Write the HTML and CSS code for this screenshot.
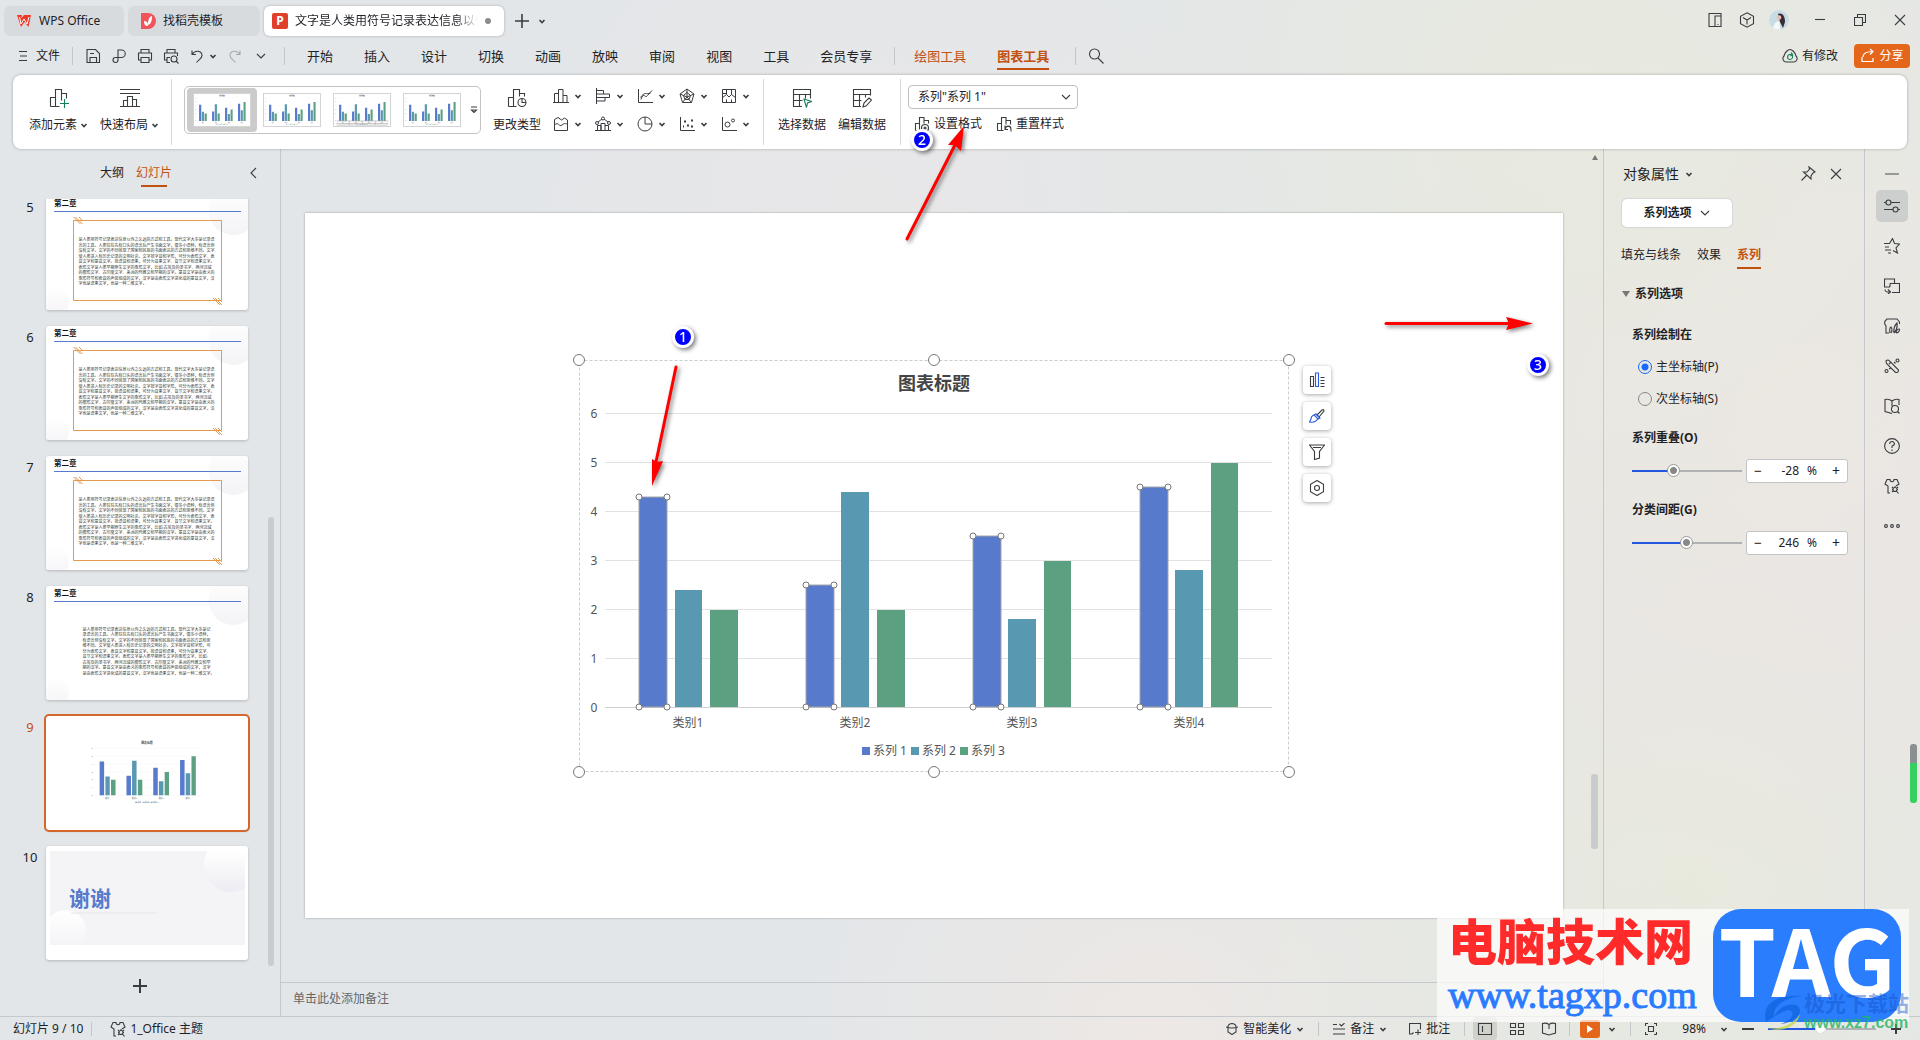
FILE: index.html
```html
<!DOCTYPE html>
<html lang="zh-CN">
<head>
<meta charset="utf-8">
<title>WPS Office</title>
<link rel="stylesheet" href="styles.css">
</head>
<body>
<svg class="defs" aria-hidden="true">
  <symbol id="chev" viewBox="0 0 8 8"><path d="M1.500 3 4 5.500 6.500 3" stroke-width="1.600"/></symbol>
  <symbol id="chev-lg" viewBox="0 0 12 12"><path d="M2 4 6 8 10 4"/></symbol>
  <symbol id="save" viewBox="0 0 16 16"><path d="M2 14.500V1.500h8.500l4 4v9zM5 14V9.500h6.500V14M5 5.500h4"/></symbol>
  <symbol id="export" viewBox="0 0 16 16"><path d="M7 9V2h3.500a3.500 3.500 0 0 1 0 7.500H4.500a2.500 2.500 0 1 0 2.500 2.500V9"/></symbol>
  <symbol id="print" viewBox="0 0 16 16"><path d="M4 5V1.500h8V5M4 12H1.500V5h13v7H12M4 9.500h8v5H4z"/></symbol>
  <symbol id="preview" viewBox="0 0 16 16"><path d="M4 5V1.500h8V5M4 12H1.500V5h13v3M7 14.500H4v-5h3"/><circle cx="11" cy="11" r="3"/><path d="m13 13 2.500 2.500"/></symbol>
  <symbol id="undo" viewBox="0 0 16 16"><path d="M3 2.500v4h4M3 6.500C6 1.500 13 2.500 13 7.500c0 3-3 4-5.500 7"/></symbol>
  <symbol id="redo" viewBox="0 0 16 16"><path d="M13 2.500v4H9M13 6.500C10 1.500 3 2.500 3 7.500c0 3 3 4 5.500 7"/></symbol>
  <symbol id="search" viewBox="0 0 16 16"><circle cx="6.500" cy="6" r="5"/><path d="m10 10 5.500 5.500"/></symbol>
  <symbol id="chart-col" viewBox="0 0 16 16"><path d="M1.500 14.500V5.500h4v9M5.500 14.500v-13h4.500v13M10 7.500h4v7M0 14.500h16"/></symbol>
  <symbol id="chart-bar" viewBox="0 0 16 16"><path d="M1.500 0v16M1.500 2.500h7v3.500M1.500 6h13v3.500h-13M1.500 9.500M10 9.500v3.500H1.500"/></symbol>
  <symbol id="chart-line" viewBox="0 0 16 16"><path d="M1.500 1v13.500H16M4 11.500c3-9 4 0 6.500-4L15 2.500M3.500 9.500C8 3 9 7 13.500 5"/></symbol>
  <symbol id="chart-radar" viewBox="0 0 16 16"><path d="M8 1 15 6 12.500 14.500h-9L1 6zM8 1v8M8 9l4.500 5.500M8 9l-4.500 5.500M1 6l7 3 7-3M8 4.500l3.500 3-1.500 4H6l-1.500-4z"/></symbol>
  <symbol id="chart-map" viewBox="0 0 16 16"><path d="M1.500 1.500h13v13h-13zM1.500 9.500l4-3 2.500 2.500 2.500-2.500 4 3M5.500 1.500v5M10.500 1.500v5M1.500 5.500h4M5.500 14.500v-3M10.500 14.500v-3"/></symbol>
  <symbol id="chart-area" viewBox="0 0 16 16"><path d="M1.500 14.500V3.500l3.500-2 3.500 2.500 3-2 3 2v10.500zM1.500 9c4-4 4.500 2.500 7.500 0s4-1 5.500-1"/></symbol>
  <symbol id="chart-combo" viewBox="0 0 16 16"><path d="M2.500 14.500V9.500h3.500v5M6 14.500v-7h4v7M10 9.500h3.500v5M0 14.500h16M3 6l4-3M9 3l4 3"/><circle cx="2" cy="7" r="1.500"/><circle cx="8" cy="2.500" r="1.500"/><circle cx="14" cy="7" r="1.500"/></symbol>
  <symbol id="chart-pie" viewBox="0 0 16 16"><circle cx="8" cy="8" r="7"/><path d="M8 1v7h7"/></symbol>
  <symbol id="chart-dots" viewBox="0 0 16 16"><path d="M1.500 1v13.500H16"/><path d="M5 5.500h2M8 9.500h2M12 4.500h2M12 10.500h2M4 10.500h1" stroke-width="2"/></symbol>
  <symbol id="chart-bubble" viewBox="0 0 16 16"><path d="M1.500 1v13.500H16"/><circle cx="6.500" cy="8.500" r="2.500"/><circle cx="12" cy="4.500" r="1.500"/></symbol>
  <symbol id="add-el" viewBox="0 0 20 20"><path d="M1.500 18.500V9.500h5M6.500 18.500v-17h6v11M12.500 5.500h5v5M1.500 18.500h9"/><path class="green" d="M11 15.500h9M15.500 11v9"/></symbol>
  <symbol id="layout" viewBox="0 0 20 20"><path d="M0 1.500h20M0 5.500h20M3.500 18.500v-6h4M7.500 18.500v-10h5v10M12.500 11.500h4v7M0 18.500h20"/></symbol>
  <symbol id="change-type" viewBox="0 0 20 20"><path d="M1.500 18.500V9.500h5M6.500 18.500v-17h6v7M12.500 5.500h5v3M1.500 18.500h8"/><circle cx="15" cy="14.500" r="4"/><path d="M15 10.500v4h4"/></symbol>
  <symbol id="table-sel" viewBox="0 0 20 20"><path d="M10 18.500H1.500v-17h17v9M1.500 6.500h17M1.500 12.500h9M7.500 6.500v12M13.500 6.500v4"/><path class="green" d="m12 11 7.500 2.500-4 1.500-1 4.500z"/></symbol>
  <symbol id="table-edit" viewBox="0 0 20 20"><path d="M9 18.500H1.500v-17h17v6M1.500 6.500h17M1.500 12.500h8M7.500 6.500v12M13.500 6.500v3M11 19l1-4 5-5 2.500 2-5.500 6z"/></symbol>
  <symbol id="fmt" viewBox="0 0 16 16"><path d="M1.500 14.500v-7h4M5.500 14.500v-13h4.500v6M10 4.500h4.500v3M1.500 14.500h5"/><circle cx="11" cy="12" r="3.500"/><circle cx="11" cy="12" r="1"/></symbol>
  <symbol id="reset" viewBox="0 0 16 16"><path d="M1.500 14.500v-7h4M5.500 14.500v-13h4.500v7M10 4.500h4.500v4M1.500 14.500h6M9 9.500v4h3M9 13.500c1-5 6-4 6 0v2"/></symbol>
  <symbol id="shirt" viewBox="0 0 16 16"><path d="M6 15H4V8L1 6l2-4.500h3c0 3 4 3 4 0h3L15 6l-3 2"/><circle cx="11" cy="11.500" r="2"/><path d="m8 9 1 1M14 9l-1 1M8 14l1-1M12.500 13l2 2.500M11 8v1M8 11.500h1M13 11.500h1"/></symbol>
</svg>

<header class="titlebar">
  <nav class="doctabs">
    <button class="doctab home"><svg class="logo" viewBox="0 0 16 14"><path d="M1 1h5l-1 3.500L8 1h7L12.500 13 8.500 8 5 13z" fill="#f03a28"/><path d="m3.500 3 1.500 7 3-5 3 5L13 3" stroke="#fff" stroke-width="1" fill="none"/></svg>WPS Office</button>
    <button class="doctab shell"><svg class="logo" viewBox="0 0 16 16"><path d="M1 0h7a8 8 0 0 1 0 16H1z" fill="#f0535a"/><path d="M4 8c4 0 4 3 4 5-3 0-4-2-4-5zM8 12c0-6 2-9 4-9 0 5-1 8-4 9z" fill="#fff"/></svg>找稻壳模板</button>
    <button class="doctab current"><span class="pbadge">P</span><span class="doctitle">文字是人类用符号记录表达信息以传</span><i class="dot"></i></button>
    <button class="plain" aria-label="新建"><svg class="ic s16" viewBox="0 0 16 16"><path d="M1 8h14M8 1v14" stroke-width="1.600"/></svg></button>
    <button class="plain more" aria-label="更多"><svg class="ic s8"><use href="#chev"/></svg></button>
  </nav>
  <div class="syscluster">
    <button class="sys" aria-label="侧栏"><svg class="ic s16" viewBox="0 0 16 16"><path d="M14 4V1.500H2v13h6M8 4h6v10.500H8zM10.500 12.500h1"/></svg></button>
    <button class="sys" aria-label="组件"><svg class="ic s16" viewBox="0 0 16 16"><path d="m8 .800 6.500 3.500v7.400L8 15.200l-6.500-3.500V4.300zM4 5.500 8 8l4-2.500M8 8v4.500"/></svg></button>
    <button class="sys avatar" aria-label="账号"><svg class="s20" viewBox="0 0 20 20"><circle cx="10" cy="10" r="10" fill="#c9dce4"/><path d="M9 4c5-2 7 3 7 8l-2 6-3-6z" fill="#3a2c36"/><circle cx="10" cy="7.500" r="2.300" fill="#e8c0b4"/><path d="M4 18q1-6 6-7l1.500 8.500Q7 20 4 18z" fill="#f4f7f9"/></svg></button>
    <button class="sys wide" aria-label="最小化"><svg class="ic s12" viewBox="0 0 12 12"><path d="M1 5.500h10"/></svg></button>
    <button class="sys wide" aria-label="还原"><svg class="ic s12" viewBox="0 0 12 12"><path d="M.500 3.500h8v8h-8zM3.500 3.500v-3h8v8h-3"/></svg></button>
    <button class="sys wide" aria-label="关闭"><svg class="ic s12" viewBox="0 0 12 12"><path d="m1 1 10 10M11 1 1 11"/></svg></button>
  </div>
</header>

<div class="menubar">
  <button class="file"><svg class="ic s12" viewBox="0 0 12 12"><path d="M1 1.500h8M2 6h7M1 10.500h8"/></svg>文件</button>
  <i class="vline"></i>
  <div class="quick">
    <button class="plain" aria-label="保存"><svg class="ic s16"><use href="#save"/></svg></button>
    <button class="plain" aria-label="输出"><svg class="ic s16"><use href="#export"/></svg></button>
    <button class="plain" aria-label="打印"><svg class="ic s16"><use href="#print"/></svg></button>
    <button class="plain" aria-label="打印预览"><svg class="ic s16"><use href="#preview"/></svg></button>
    <button class="plain split" aria-label="撤销"><svg class="ic s16"><use href="#undo"/></svg><svg class="ic s8"><use href="#chev"/></svg></button>
    <button class="plain faded" aria-label="恢复"><svg class="ic s16"><use href="#redo"/></svg></button>
    <button class="plain" aria-label="自定义"><svg class="ic s12"><use href="#chev-lg"/></svg></button>
  </div>
  <i class="vline"></i>
  <nav class="menus">
    <button>开始</button><button>插入</button><button>设计</button><button>切换</button><button>动画</button><button>放映</button><button>审阅</button><button>视图</button><button>工具</button><button>会员专享</button>
  </nav>
  <i class="vline"></i>
  <nav class="menus tools"><button>绘图工具</button><button class="on">图表工具</button></nav>
  <i class="vline"></i>
  <button class="plain find" aria-label="搜索"><svg class="ic s16"><use href="#search"/></svg></button>
  <div class="sharing">
    <button class="plain cloud"><svg class="ic s16" viewBox="0 0 16 16"><path d="M4 14a3.500 3.500 0 0 1-2-6C3 4 6 1.500 8 1.500S13 4 14 8a3.500 3.500 0 0 1-2 6z"/><path class="green" d="M10.500 7v2.500a2.500 2.500 0 1 1-2.500-3h2M9 4.500l1.500 2-2 1.500"/></svg>有修改</button>
    <button class="share"><svg class="s16" viewBox="0 0 16 16" fill="none" stroke="#fff" stroke-width="1.200"><path d="M2 9v4.500h11V10M3 9c0-4 4-5.500 10-5.500M10 1l3 2.500-3 3"/></svg>分享</button>
  </div>
</div>

<section class="ribbon">
  <button class="big"><svg class="ic s20"><use href="#add-el"/></svg><span>添加元素<svg class="ic s8"><use href="#chev"/></svg></span></button>
  <button class="big"><svg class="ic s20"><use href="#layout"/></svg><span>快速布局<svg class="ic s8"><use href="#chev"/></svg></span></button>
  <i class="sep"></i>
  <div class="gallery">
    <button class="style on" aria-label="样式 1"><svg viewBox="0 0 710 412"><use href="#plot"/></svg></button>
    <button class="style" aria-label="样式 2"><svg viewBox="0 0 710 412"><use href="#plot"/></svg></button>
    <button class="style" aria-label="样式 3"><svg viewBox="0 0 710 412"><use href="#plot"/><path d="M26 347h667M26 380h667M26 400h667M192 347v53M359 347v53M526 347v53" stroke="#aaa" stroke-width="8"/></svg></button>
    <button class="style" aria-label="样式 4"><svg viewBox="0 0 710 412"><use href="#plot"/></svg></button>
    <button class="plain" aria-label="更多样式"><svg class="ic s8" viewBox="0 0 8 8"><path d="M1 1h6M1.500 4 4 6.500 6.500 4z"/></svg></button>
  </div>
  <button class="big"><svg class="ic s20"><use href="#change-type"/></svg><span>更改类型</span></button>
  <div class="types">
    <button aria-label="柱形图"><svg class="ic s16"><use href="#chart-col"/></svg><svg class="ic s8"><use href="#chev"/></svg></button>
    <button aria-label="条形图"><svg class="ic s16"><use href="#chart-bar"/></svg><svg class="ic s8"><use href="#chev"/></svg></button>
    <button aria-label="折线图"><svg class="ic s16"><use href="#chart-line"/></svg><svg class="ic s8"><use href="#chev"/></svg></button>
    <button aria-label="雷达图"><svg class="ic s16"><use href="#chart-radar"/></svg><svg class="ic s8"><use href="#chev"/></svg></button>
    <button aria-label="地图"><svg class="ic s16"><use href="#chart-map"/></svg><svg class="ic s8"><use href="#chev"/></svg></button>
    <button aria-label="面积图"><svg class="ic s16"><use href="#chart-area"/></svg><svg class="ic s8"><use href="#chev"/></svg></button>
    <button aria-label="组合图"><svg class="ic s16"><use href="#chart-combo"/></svg><svg class="ic s8"><use href="#chev"/></svg></button>
    <button aria-label="饼图"><svg class="ic s16"><use href="#chart-pie"/></svg><svg class="ic s8"><use href="#chev"/></svg></button>
    <button aria-label="散点图"><svg class="ic s16"><use href="#chart-dots"/></svg><svg class="ic s8"><use href="#chev"/></svg></button>
    <button aria-label="气泡图"><svg class="ic s16"><use href="#chart-bubble"/></svg><svg class="ic s8"><use href="#chev"/></svg></button>
  </div>
  <i class="sep"></i>
  <div class="pair">
    <button class="big"><svg class="ic s20"><use href="#table-sel"/></svg><span>选择数据</span></button>
    <button class="big"><svg class="ic s20"><use href="#table-edit"/></svg><span>编辑数据</span></button>
  </div>
  <i class="sep"></i>
  <div class="formatting">
    <div class="selectbox">
      <select aria-label="图表元素"><option>系列"系列 1"</option></select>
      <svg class="ic s12"><use href="#chev-lg"/></svg>
    </div>
    <div class="fmtrow">
      <button><svg class="ic s16"><use href="#fmt"/></svg>设置格式</button>
      <button><svg class="ic s16"><use href="#reset"/></svg>重置样式</button>
    </div>
  </div>
</section>

<main class="main">
  <aside class="slides">
    <div class="sidetabs">
      <button>大纲</button><button class="on">幻灯片</button>
      <button class="collapse" aria-label="收起"><svg class="ic s12" viewBox="0 0 12 12"><path d="M8 1 3 6l5 5"/></svg></button>
    </div>
    <ol class="list">
      <li class="cut"><span>5</span>
        <svg class="thumb" viewBox="0 0 404 228">
          <circle cx="375" cy="28" r="50" fill="url(#orb2)"/><circle cx="16" cy="212" r="30" fill="url(#orb2)"/>
          <text x="16" y="20" class="chap">第二章</text><path d="M16 31h374" class="rule"/>
          <path d="M55 49h296v160H55zM55 42l14 14M59 42l14 14M66 42l8 8M334 204l14 14M338 204l14 14M344 204l8 8" class="frame"/>
          <text class="para"><tspan x="65" y="90">是人类用符号记录表达信息以传之久远的方式和工具。现代文字大多是记录语</tspan><tspan x="65" dy="11">言的工具。人类往往先有口头的语言后产生书面文字，很多小语种，有语言但</tspan><tspan x="65" dy="11">没有文字。文字的不同体现了国家和民族的书面表达的方式和思维不同。文字</tspan><tspan x="65" dy="11">使人类进入有历史记录的文明社会。文字按字音和字形，可分为表形文字、表</tspan><tspan x="65" dy="11">音文字和意音文字。按语音和语素，可分为音素文字、音节文字和语素文字。</tspan><tspan x="65" dy="11">表形文字是人类早期原生文字的象形文字，比如:古埃及的圣书字、两河流域</tspan><tspan x="65" dy="11">的楔形文字、古印度文字、美洲的玛雅文和早期的汉字。意音文字是由表义的</tspan><tspan x="65" dy="11">象形符号和表音的声旁组成的文字，汉字是由表形文字进化成的意音文字，汉</tspan><tspan x="65" dy="11">字也是语素文字，也是一种二维文字。</tspan></text>
        </svg></li>
      <li><span>6</span>
        <svg class="thumb" viewBox="0 0 404 228">
          <circle cx="375" cy="28" r="50" fill="url(#orb2)"/><circle cx="16" cy="212" r="30" fill="url(#orb2)"/>
          <text x="16" y="20" class="chap">第二章</text><path d="M16 31h374" class="rule"/>
          <path d="M55 49h296v160H55zM55 42l14 14M59 42l14 14M66 42l8 8M334 204l14 14M338 204l14 14M344 204l8 8" class="frame"/>
          <text class="para"><tspan x="65" y="90">是人类用符号记录表达信息以传之久远的方式和工具。现代文字大多是记录语</tspan><tspan x="65" dy="11">言的工具。人类往往先有口头的语言后产生书面文字，很多小语种，有语言但</tspan><tspan x="65" dy="11">没有文字。文字的不同体现了国家和民族的书面表达的方式和思维不同。文字</tspan><tspan x="65" dy="11">使人类进入有历史记录的文明社会。文字按字音和字形，可分为表形文字、表</tspan><tspan x="65" dy="11">音文字和意音文字。按语音和语素，可分为音素文字、音节文字和语素文字。</tspan><tspan x="65" dy="11">表形文字是人类早期原生文字的象形文字，比如:古埃及的圣书字、两河流域</tspan><tspan x="65" dy="11">的楔形文字、古印度文字、美洲的玛雅文和早期的汉字。意音文字是由表义的</tspan><tspan x="65" dy="11">象形符号和表音的声旁组成的文字，汉字是由表形文字进化成的意音文字，汉</tspan><tspan x="65" dy="11">字也是语素文字，也是一种二维文字。</tspan></text>
        </svg></li>
      <li><span>7</span>
        <svg class="thumb" viewBox="0 0 404 228">
          <circle cx="375" cy="28" r="50" fill="url(#orb2)"/><circle cx="16" cy="212" r="30" fill="url(#orb2)"/>
          <text x="16" y="20" class="chap">第二章</text><path d="M16 31h374" class="rule"/>
          <path d="M55 49h296v160H55zM55 42l14 14M59 42l14 14M66 42l8 8M334 204l14 14M338 204l14 14M344 204l8 8" class="frame"/>
          <text class="para"><tspan x="65" y="90">是人类用符号记录表达信息以传之久远的方式和工具。现代文字大多是记录语</tspan><tspan x="65" dy="11">言的工具。人类往往先有口头的语言后产生书面文字，很多小语种，有语言但</tspan><tspan x="65" dy="11">没有文字。文字的不同体现了国家和民族的书面表达的方式和思维不同。文字</tspan><tspan x="65" dy="11">使人类进入有历史记录的文明社会。文字按字音和字形，可分为表形文字、表</tspan><tspan x="65" dy="11">音文字和意音文字。按语音和语素，可分为音素文字、音节文字和语素文字。</tspan><tspan x="65" dy="11">表形文字是人类早期原生文字的象形文字，比如:古埃及的圣书字、两河流域</tspan><tspan x="65" dy="11">的楔形文字、古印度文字、美洲的玛雅文和早期的汉字。意音文字是由表义的</tspan><tspan x="65" dy="11">象形符号和表音的声旁组成的文字，汉字是由表形文字进化成的意音文字，汉</tspan><tspan x="65" dy="11">字也是语素文字，也是一种二维文字。</tspan></text>
        </svg></li>
      <li><span>8</span>
        <svg class="thumb" viewBox="0 0 404 228">
          <circle cx="375" cy="28" r="50" fill="url(#orb2)"/><circle cx="16" cy="212" r="30" fill="url(#orb2)"/>
          <text x="16" y="20" class="chap">第二章</text><path d="M16 31h374" class="rule"/>
          <text class="para"><tspan x="73" y="89">是人类用符号记录表达信息以传之久远的方式和工具。现代文字大多是记</tspan><tspan x="73" dy="11">录语言的工具。人类往往先有口头的语言后产生书面文字，很多小语种，</tspan><tspan x="73" dy="11">有语言但没有文字。文字的不同体现了国家和民族的书面表达的方式和思</tspan><tspan x="73" dy="11">维不同。文字使人类进入有历史记录的文明社会。文字按字音和字形，可</tspan><tspan x="73" dy="11">分为表形文字、表音文字和意音文字。按语音和语素，可分为音素文字、</tspan><tspan x="73" dy="11">音节文字和语素文字。表形文字是人类早期原生文字的象形文字，比如:</tspan><tspan x="73" dy="11">古埃及的圣书字、两河流域的楔形文字、古印度文字、美洲的玛雅文和早</tspan><tspan x="73" dy="11">期的汉字。意音文字是由表义的象形符号和表音的声旁组成的文字，汉字</tspan><tspan x="73" dy="11">是由表形文字进化成的意音文字，汉字也是语素文字，也是一种二维文字。</tspan></text>
        </svg></li>
      <li class="sel"><span>9</span>
        <svg class="thumb" viewBox="0 0 1258 710"><svg x="274" y="147" width="710" height="412" viewBox="0 0 710 412"><use href="#plot"/></svg></svg></li>
      <li><span>10</span>
        <svg class="thumb" viewBox="0 0 404 228">
          <defs><linearGradient id="orb" x2="0" y2="1"><stop offset="0" stop-color="#fff"/><stop offset="1" stop-color="#ececf2"/></linearGradient>
          <linearGradient id="orb2" x2="0" y2="1"><stop offset="0" stop-color="#fff"/><stop offset="1" stop-color="#f4f4f7"/></linearGradient></defs>
          <path d="M8 10h390v188H8z" fill="#f4f4f6"/>
          <path d="M316 38a54 54 0 0 0 82 46V10h-75q-7 14-7 28z" fill="url(#orb)"/>
          <path d="M8 142a40 40 0 0 1 62 56H8z" fill="url(#orb2)"/>
          <text x="46" y="119" class="thanks">谢谢</text><path d="M50 134h172" stroke="#e6e6ea" stroke-width="2"/>
        </svg></li>
    </ol>
    <button class="addslide" aria-label="新建幻灯片"><svg class="ic s16" viewBox="0 0 16 16"><path d="M1 8h14M8 1v14" stroke-width="2"/></svg></button>
    <i class="vscroll"></i>
  </aside>

  <section class="work">
    <div class="canvas">
      <div class="slide">
        <div class="chartbox">
          <svg class="chart" width="710" height="412" viewBox="0 0 710 412">
            <g id="plot">
              <text x="355" y="30" class="ct">图表标题</text>
              <path class="grid" d="M26 53.500h667M26 102.500h667M26 151.500h667M26 200.500h667M26 249.500h667M26 298.500h667"/>
              <path class="axis" d="M26 347.500h667"/>
              <g class="ylab"><text x="15" y="58">6</text><text x="15" y="107">5</text><text x="15" y="156">4</text><text x="15" y="205">3</text><text x="15" y="254">2</text><text x="15" y="303">1</text><text x="15" y="352">0</text></g>
              <g fill="#577acc"><path d="M60 137h28v210H60zM227 225h28v122h-28zM394 176h28v171h-28zM561 127h28v220h-28z"/><path d="M283 387h8v8h-8z"/></g>
              <g fill="#5898b1"><path d="M96 230h27v117H96zM262 132h28v215h-28zM429 259h28v88h-28zM596 210h28v137h-28z"/><path d="M332 387h8v8h-8z"/></g>
              <g fill="#5ba081"><path d="M131 250h28v97h-28zM298 250h28v97h-28zM465 201h27v146h-27zM632 103h27v244h-27z"/><path d="M381 387h8v8h-8z"/></g>
              <g class="xlab"><text x="109" y="367">类别1</text><text x="276" y="367">类别2</text><text x="443" y="367">类别3</text><text x="610" y="367">类别4</text></g>
              <g class="leg"><text x="294" y="395">系列 1</text><text x="343" y="395">系列 2</text><text x="392" y="395">系列 3</text></g>
            </g>
            <path class="dash" d="M.500 .500h709v411H.500z"/>
            <path class="barsel" d="M60 137h28v210H60zM227 225h28v122h-28zM394 176h28v171h-28zM561 127h28v220h-28z"/>
            <g class="knob"><circle cx="60" cy="137" r="3"/><circle cx="88" cy="137" r="3"/><circle cx="60" cy="347" r="3"/><circle cx="88" cy="347" r="3"/><circle cx="227" cy="225" r="3"/><circle cx="255" cy="225" r="3"/><circle cx="227" cy="347" r="3"/><circle cx="255" cy="347" r="3"/><circle cx="394" cy="176" r="3"/><circle cx="422" cy="176" r="3"/><circle cx="394" cy="347" r="3"/><circle cx="422" cy="347" r="3"/><circle cx="561" cy="127" r="3"/><circle cx="589" cy="127" r="3"/><circle cx="561" cy="347" r="3"/><circle cx="589" cy="347" r="3"/>
            <circle cx="0" cy="0" r="5.500"/><circle cx="355" cy="0" r="5.500"/><circle cx="710" cy="0" r="5.500"/><circle cx="0" cy="412" r="5.500"/><circle cx="355" cy="412" r="5.500"/><circle cx="710" cy="412" r="5.500"/></g>
          </svg>
          <div class="floaters">
            <button aria-label="图表元素"><svg class="ic s16" viewBox="0 0 16 16"><path d="M1.500 4.500h3v10h-3zM11.500 5.500h4M11.500 8.500h4M11.500 11.500h4M11.500 14.500h4"/><path class="blue" d="M6.500 1h3v13.500h-3z"/></svg></button>
            <button aria-label="图表样式"><svg class="ic s16" viewBox="0 0 16 16"><path d="m8 7 5-5q2-1 2 1l-5 6z"/><path class="blue" d="m7 6 4 4-2 1-4-4zM5 7q-3 1-3 4l-1.500 3q6 1 8.500-3.500"/></svg></button>
            <button aria-label="图表筛选"><svg class="ic s16" viewBox="0 0 16 16"><path d="M.500 1h15l-5 6.500V14l-5 1.500v-8zM4 3.500h8"/></svg></button>
            <button aria-label="图表设置"><svg class="ic s16" viewBox="0 0 16 16"><path d="m8 .500 6.500 3.800v7.400L8 15.500l-6.500-3.800V4.300z"/><circle cx="8" cy="8" r="2.500"/></svg></button>
          </div>
        </div>
      </div>
      <span class="uparrow"></span><i class="vscroll"></i>
    </div>
    <div class="notes">单击此处添加备注</div>
  </section>

  <aside class="props">
    <header><h2>对象属性</h2><svg class="ic s8"><use href="#chev"/></svg>
      <button class="plain pin" aria-label="固定"><svg class="ic s16" viewBox="0 0 16 16"><path d="m9 1 6 5-2 1-2 3v3L3.500 6H7l2.500-3zM6.500 9.500 1.500 14.500"/></svg></button>
      <button class="plain" aria-label="关闭"><svg class="ic s12" viewBox="0 0 12 12"><path d="m1 1 10 10M11 1 1 11"/></svg></button></header>
    <button class="picker">系列选项<svg class="ic s12"><use href="#chev-lg"/></svg></button>
    <nav class="ptabs"><button>填充与线条</button><button>效果</button><button class="on">系列</button></nav>
    <h3 class="section"><i></i>系列选项</h3>
    <div class="fields">
      <h3>系列绘制在</h3>
      <label class="radio"><input type="radio" name="axis" checked>主坐标轴(P)</label>
      <label class="radio"><input type="radio" name="axis">次坐标轴(S)</label>
      <label class="cap" for="overlap">系列重叠(O)</label>
      <div class="range"><input id="overlap" type="range" min="-100" max="100" value="-28" style="--fill:38%">
        <div class="spin"><button aria-label="减少">−</button><input type="text" value="-28" aria-label="系列重叠值"><span>%</span><button aria-label="增加">+</button></div></div>
      <label class="cap" for="gapw">分类间距(G)</label>
      <div class="range"><input id="gapw" type="range" min="0" max="500" value="246" style="--fill:49%">
        <div class="spin"><button aria-label="减少">−</button><input type="text" value="246" aria-label="分类间距值"><span>%</span><button aria-label="增加">+</button></div></div>
    </div>
  </aside>

  <nav class="rail">
    <i class="grip"></i>
    <button class="on" aria-label="属性"><svg class="ic s16" viewBox="0 0 16 16"><path d="M0 4.500h2M7 4.500h9M0 11.500h9M14 11.500h2"/><circle cx="4.500" cy="4.500" r="2.500"/><circle cx="11.500" cy="11.500" r="2.500"/></svg></button>
    <button aria-label="动画"><svg class="ic s16" viewBox="0 0 16 16"><path d="m5.500 5.500 3-5 2 5 5 .500-3.500 4 1.500 5-4.500-2.500M0 5.500h5.500M1 9h4M1 12h6M4 15h3"/></svg></button>
    <button aria-label="切换"><svg class="ic s16" viewBox="0 0 16 16"><path d="M6 9H.500V1h10v4.500M6 5.500h9.500v9H8M6 5.500V9M1 11.500q0 3 5 2.500M4 11.500l2.500 2.500L4 16"/></svg></button>
    <button aria-label="稻壳"><svg class="ic s16" viewBox="0 0 16 16"><path d="M5 15H2V8Q0 6 1 3l2-2h10l2.500 3v2M6 15q-1-5 1-6 2 3 0 6M10 15q-1-6 3-10 1 6-3 10M12 15q0-4 4-4-1 4-4 4"/></svg></button>
    <button aria-label="智能"><svg class="ic s16" viewBox="0 0 16 16"><path d="M2 3q2-2 3.500 0L14.500 12q0 3-3 2.500L2.500 5.500zM5 6 7 4M10 4l1.500 1.500"/><circle cx="13.500" cy="2.500" r="1.500"/><circle cx="2.500" cy="13" r="1.500"/><path d="m5 11 2-1"/></svg></button>
    <button aria-label="查找"><svg class="ic s16" viewBox="0 0 16 16"><path d="M8 15.500 1 13.500V1.500q4-1 7 1.500 3-2.500 7-1.500V7M8 3v5"/><circle cx="11" cy="11" r="3.500"/><path d="m13.500 13.500 2 2"/></svg></button>
    <button aria-label="帮助"><svg class="ic s16" viewBox="0 0 16 16"><circle cx="8" cy="8" r="7.400"/><path d="M5.500 6Q6 3.500 8 3.500T10.500 6Q10 7.500 8 8v2M8 11.500v1.500"/></svg></button>
    <button aria-label="主题"><svg class="ic s16"><use href="#shirt"/></svg></button>
    <button aria-label="更多"><svg class="ic s16" viewBox="0 0 16 16"><circle cx="2" cy="8" r="1.400"/><circle cx="8" cy="8" r="1.400"/><circle cx="14" cy="8" r="1.400"/></svg></button>
    <i class="meter"></i>
  </nav>
</main>

<footer class="status">
  <span>幻灯片 9 / 10</span><i class="vline"></i>
  <button class="plain theme"><svg class="ic s16"><use href="#shirt"/></svg>1_Office 主题</button>
  <div class="stright">
    <button class="plain"><svg class="ic s12" viewBox="0 0 12 12"><path d="M2 4v5l4 2.500L10 9V4q0-3-4-3.500Q2 1 2 4zM0 4q6 2 12 0"/></svg>智能美化<svg class="ic s8"><use href="#chev"/></svg></button>
    <i class="vline"></i>
    <button class="plain"><svg class="ic s12" viewBox="0 0 12 12"><path d="M0 1.500h4M0 6h12M0 11h12M6.500 1l2 2 3-3"/></svg>备注<svg class="ic s8"><use href="#chev"/></svg></button>
    <button class="plain comment"><svg class="ic s12" viewBox="0 0 12 12"><path d="M3 11H.500V.500h11v6M6 9.500h6M9 6.500v6M3 11l1.500-1.500"/></svg>批注</button>
    <i class="vline"></i>
    <div class="views">
      <button class="on" aria-label="普通视图"><svg class="ic s16" viewBox="0 0 16 16"><path d="M1.500 2.500h13v11h-13zM5.500 5v6"/></svg></button>
      <button aria-label="浏览视图"><svg class="ic s16" viewBox="0 0 16 16"><path d="M1.500 2.500h5v4h-5zM9.500 2.500h5v4h-5zM1.500 9.500h5v4h-5zM9.500 9.500h5v4h-5z"/></svg></button>
      <button aria-label="阅读视图"><svg class="ic s16" viewBox="0 0 16 16"><path d="M8 14 1.500 12V2.500Q5 1.500 8 3.500q3-2 6.500-1V12zM8 3.500V8"/></svg></button>
    </div>
    <i class="vline"></i>
    <button class="play" aria-label="放映"><svg class="s8" viewBox="0 0 8 8"><path d="M1 0v8l6-4z" fill="#fff"/></svg></button>
    <svg class="ic s8"><use href="#chev"/></svg>
    <i class="vline"></i>
    <button class="plain fit" aria-label="适应"><svg class="ic s12" viewBox="0 0 12 12"><path d="M.500 3V.500H3M9 .500h2.500V3M11.500 9v2.500H9M3 11.500H.500V9M3.500 3.500h5v5h-5z"/></svg></button>
    <span class="zoomv">98%</span><svg class="ic s8"><use href="#chev"/></svg>
    <button class="plain" aria-label="缩小"><svg class="ic s12" viewBox="0 0 12 12"><path d="M0 6h12" stroke-width="2"/></svg></button>
    <input class="zoom" type="range" min="0" max="100" value="48" aria-label="显示比例" style="--fill:48%">
    <button class="plain" aria-label="放大"><svg class="ic s12" viewBox="0 0 12 12"><path d="M1 6h10M6 1v10" stroke-width="2"/></svg></button>
  </div>
</footer>

<svg class="marks" width="1600" height="520" viewBox="0 0 1600 520">
  <g class="arrow"><path d="m676 367-20 95"/><path class="tip" d="m652 486 0-27 5 3 6-1z"/>
  <path d="m907 239 48-94"/><path class="tip" d="m964 126-16 19 7 0 6 6z"/>
  <path d="M1386 323.500h124"/><path class="tip" d="m1533 323.500-27-6.500 3 6.500-3 6.500z"/></g>
  <g class="num"><circle cx="683" cy="337" r="9.500"/><circle cx="922" cy="140" r="9.500"/><circle cx="1538" cy="365" r="9.500"/></g>
  <g class="numt"><text x="683" y="342">1</text><text x="922" y="145">2</text><text x="1538" y="370">3</text></g>
</svg>

<div class="brand">
  <div class="words"><span class="cn">电脑技术网</span><span class="url">www.tagxp.com</span></div>
  <div class="tag">TAG</div>
  <div class="sub">
    <svg width="40" height="40" viewBox="0 0 40 40"><path d="M2 32C-4 10 20 4 38 6 20 8 8 16 10 28c4-14 24-18 26-8 1 8-12 14-20 14 10-3 14-8 12-12-4-6-16 4-26 10z" fill="#0f62dd" opacity=".7"/><path d="M2 38c14 2 28-4 34-14-2 10-14 20-34 14z" fill="#c8d84a" opacity=".8"/></svg>
    <div><span class="subcn">极光下载站</span><span class="suburl">www.xz7.com</span></div>
  </div>
</div>
</body>
</html>
```
FILE: styles.css
```css
* { box-sizing: border-box; }
html { height: 100%; }
body {
  margin: 0; height: 100%; min-height: 1000px; overflow: hidden; position: relative;
  display: flex; flex-direction: column;
  font: 12px/18px "Noto Sans", "Noto Sans CJK SC", sans-serif; color: #1f2225;
  background:
    radial-gradient(circle at 82% 10%, rgba(232,234,222,.9), transparent 30%),
    radial-gradient(circle at 94% 40%, rgba(238,230,226,.9), transparent 30%),
    radial-gradient(circle at 88% 85%, rgba(232,234,220,.9), transparent 26%),
    radial-gradient(circle at 45% 20%, rgba(234,231,232,.8), transparent 30%),
    radial-gradient(circle at 60% 100%, rgba(238,232,228,.9), transparent 24%),
    #e2e6e9;
}
button, input, select { font: inherit; color: inherit; margin: 0; padding: 0; border: 0; background: none; }
button { display: flex; align-items: center; white-space: nowrap; }
h2, h3, ol { margin: 0; padding: 0; font: inherit; list-style: none; }
.defs { position: absolute; width: 0; height: 0; }
.ic { fill: none; stroke: #3a3d40; stroke-width: 1.1; }
svg { flex: none; display: block; }
.s8 { width: 8px; height: 8px; }
.s12 { width: 12px; height: 12px; }
.s16 { width: 16px; height: 16px; }
.s20 { width: 20px; height: 20px; }
.green { stroke: #12805c; }
.blue { stroke: #2a5be0; }
.vline { width: 1px; height: 18px; background: #c4c7ca; flex: none; }

/* title bar */
.titlebar { display: flex; justify-content: space-between; padding: 6px 0 0 4px; }
.doctabs { display: flex; gap: 4px; }
.doctab { height: 30px; border-radius: 6px; background: #d8dbde; gap: 7px; }
.home { width: 120px; padding-left: 12px; }
.shell { width: 132px; padding-left: 12px; }
.current { width: 240px; padding: 0 13px 0 8px; background: #fff; box-shadow: 0 0 3px rgba(0,0,0,.25); }
.logo { width: 16px; height: 16px; }
.pbadge { width: 16px; height: 16px; border-radius: 2px; background: #e0402a; color: #fff; font-weight: 700; line-height: 16px; flex: none; }
.doctitle { flex: 1; overflow: hidden; text-align: left; -webkit-mask-image: linear-gradient(90deg, #000 88%, transparent); mask-image: linear-gradient(90deg, #000 88%, transparent); }
.dot { width: 6px; height: 6px; border-radius: 3px; background: #8a8d90; }
.doctabs .plain { margin-left: 6px; }
.doctabs .more { margin-left: 4px; }
.syscluster { display: flex; }
.sys { width: 32px; height: 28px; justify-content: center; }
.wide { width: 40px; }
.avatar { margin-right: 5px; }

/* menu bar */
.menubar { display: flex; align-items: center; height: 39px; padding: 0 10px 0 18px; }
.file { gap: 6px; margin-right: 12px; }
.quick { display: flex; gap: 10px; padding: 0 17px 0 12px; }
.split { gap: 4px; }
.faded { opacity: .35; }
.quick > :last-child { margin-left: 2px; }
.menus { display: flex; gap: 31px; padding: 0 22px; font-size: 13px; }
.menus button { height: 28px; border-bottom: 2px solid transparent; border-top: 2px solid transparent; }
.tools { color: #c2500f; padding: 0 26px 0 19px; }
.menus .on { font-weight: 700; border-bottom-color: #c2500f; }
.find { margin-left: 12px; }
.sharing { display: flex; gap: 16px; margin-left: auto; }
.cloud { gap: 4px; }
.share { width: 56px; height: 24px; gap: 3px; justify-content: center; border-radius: 4px; background: #e4661b; color: #fff; }

/* ribbon */
.ribbon { display: flex; align-items: flex-start; gap: 12px; min-height: 74px; margin: 0 13px; padding: 4px 16px; border-radius: 8px; background: #fff; box-shadow: 0 0 3px rgba(0,0,0,.3); z-index: 1; }
.ribbon > :not(.sep) { margin-top: 7px; }
.sep { width: 1px; height: 66px; background: #d6d6d6; flex: none; }
.big { flex-direction: column; gap: 8px; padding-top: 2px; }
.big span { display: flex; align-items: center; gap: 3px; }
.gallery { display: flex; align-items: center; width: 297px; height: 48px; padding: 2px; border: 1px solid #c4c4c4; border-radius: 5px; }
.style { width: 70px; height: 44px; justify-content: center; border-radius: 4px; }
.style svg { width: 58px; height: 34px; border: 1px solid #d4d4d4; background: #fff; }
.style.on { background: #cbcbcb; }
.gallery .plain { margin-left: 3px; }
.types { display: grid; grid-template-columns: repeat(5, 30px); gap: 8px 12px; }
.types button { height: 20px; gap: 5px; }
.types .s16 { stroke-width: 1; }
.pair { display: flex; gap: 12px; padding: 0 2px; }
.formatting { display: flex; flex-direction: column; gap: 5px; }
.ribbon > .formatting { margin-left: -5px; margin-top: 6px; }
.selectbox { position: relative; width: 170px; height: 24px; }
.selectbox select { width: 100%; height: 24px; padding: 0 9px; border: 1px solid #c0c0c0; border-radius: 4px; appearance: none; background: #fff; }
.selectbox svg { position: absolute; right: 6px; top: 6px; }
.fmtrow { display: flex; gap: 14px; padding-left: 6px; }
.fmtrow button { gap: 4px; height: 20px; }

.main { display: flex; flex: 1; min-height: 0; }

/* slide list */
.slides { position: relative; display: flex; flex-direction: column; width: 281px; flex: none; border-right: 1px solid #c6c9cc; }
.sidetabs { display: flex; gap: 12px; height: 50px; padding: 14px 20px 0 100px; }
.sidetabs button { height: 24px; padding-bottom: 4px; position: relative; }
.sidetabs .on { color: #c2500f; }
.sidetabs .on::after { content: ""; position: absolute; left: 5px; right: 5px; bottom: 0; height: 2px; background: #c2500f; }
.sidetabs .collapse { margin-left: auto; }
.list { display: flex; flex-direction: column; gap: 16px; overflow: hidden; flex: none; padding-bottom: 4px; }
.list li { display: flex; font-size: 13px; }
.list span { width: 46px; padding: 2px 0 0 14px; text-align: center; }
.thumb { width: 202px; height: 114px; border-radius: 3px; background: #fff; box-shadow: 0 1px 3px rgba(0,0,0,.2); }
.list .cut { margin-top: -3px; }
.sel { color: #c2500f; }
.sel .thumb { outline: 2px solid #d4682c; }
.chap { font-size: 15px; font-weight: 700; fill: #111; }
.rule { stroke: #577acc; stroke-width: 2; }
.frame { fill: none; stroke: #e39a4f; stroke-width: 2; }
.para { font-size: 8px; fill: #333; }
.thanks { font-size: 42px; font-weight: 700; fill: #577acc; }
.addslide { align-self: center; margin-top: 14px; }
.vscroll { position: absolute; width: 6px; border-radius: 3px; background: #c9cccd; }
.slides .vscroll { right: 6px; top: 368px; bottom: 50px; }

/* editing area */
.work { display: flex; flex-direction: column; flex: 1; min-width: 0; }
.canvas { position: relative; display: flex; flex: 1; padding: 64px 40px 64px 24px; }
.slide { position: relative; flex: 1; background: #fff; box-shadow: 0 0 2px rgba(0,0,0,.35); }
.chartbox { position: absolute; left: calc(50% - 355px); top: calc(50% - 206px); width: 710px; height: 412px; }
.chart { overflow: visible; }
.ct { font-size: 18px; font-weight: 700; fill: #444; text-anchor: middle; }
.grid { stroke: #e2e2e2; }
.axis { stroke: #d0d0d0; }
.ylab, .xlab, .leg { font-size: 12px; fill: #555; }
.ylab, .xlab { text-anchor: middle; }
.dash { fill: none; stroke: #c8ccce; stroke-dasharray: 3 2; }
.barsel { fill: none; stroke: #a6a6a6; }
.knob { fill: #fff; stroke: #777; }
.floaters { position: absolute; left: 724px; top: 6px; display: flex; flex-direction: column; gap: 8px; }
.floaters button { width: 28px; height: 28px; justify-content: center; border-radius: 4px; background: #fff; box-shadow: 0 1px 4px rgba(0,0,0,.35); }
.canvas > .vscroll { right: 5px; bottom: 133px; height: 75px; width: 7px; }
.uparrow { position: absolute; right: 5px; top: 6px; border: 3px solid transparent; border-bottom: 5px solid #777; border-top: 0; }
.notes { height: 34px; padding: 7px 12px; border-top: 1px solid #c6c9cc; color: #666; }

/* properties pane */
.props { width: 262px; flex: none; border-left: 1px solid #c6c9cc; border-right: 1px solid #c6c9cc; padding: 0 16px 0 17px; display: flex; flex-direction: column; align-items: flex-start; }
.props header { display: flex; align-items: center; align-self: stretch; gap: 6px; height: 50px; padding: 0 6px 0 2px; font-size: 14px; }
.pin { margin-left: auto; margin-right: 8px; }
.picker { width: 110px; height: 28px; margin-left: 1px; gap: 7px; justify-content: center; border-radius: 5px; background: #fff; box-shadow: 0 0 0 1px #d6d8da, 0 0 2px #ccc; font-weight: 700; }
.ptabs { display: flex; gap: 16px; margin-top: 18px; }
.ptabs button { height: 24px; padding-bottom: 2px; border-bottom: 2px solid transparent; }
.ptabs .on { color: #c2500f; border-color: #c2500f; font-weight: 700; }
.section { display: flex; align-items: center; gap: 5px; margin-top: 16px; padding-left: 1px; }
.props h3, .cap { font-weight: 700; }
.section i { border: 4px solid transparent; border-top: 6px solid #777; border-bottom: 0; }
.fields { display: flex; flex-direction: column; padding: 23px 0 0 11px; }
.radio { display: flex; align-items: center; gap: 4px; margin: 14px 0 0 6px; }
.radio input { appearance: none; width: 14px; height: 14px; border: 1px solid #888; border-radius: 7px; }
.radio input:checked { border-color: #1769ff; background: radial-gradient(circle, #1769ff 3px, transparent 4px); }
.cap { margin: 21px 0 12px; }
.range + .cap { margin-top: 18px; }
.range { display: flex; align-items: center; gap: 4px; }
input[type=range] { appearance: none; width: 110px; height: 14px; }
input[type=range]::-webkit-slider-runnable-track { height: 2px; background: linear-gradient(90deg, #2457e0 var(--fill), #b0b2b4 var(--fill)); }
input[type=range]::-webkit-slider-thumb { appearance: none; width: 13px; height: 13px; margin-top: -6px; border: 1px solid #9a9a9a; border-radius: 7px; background: radial-gradient(circle, #888 3px, #fff 4px); }
.spin { display: flex; align-items: center; width: 102px; height: 24px; border: 1px solid #c2c4c6; border-radius: 3px; background: #fff; }
.spin button { width: 22px; justify-content: center; font-size: 14px; }
.spin input { width: 30px; text-align: right; }
.spin span { width: 26px; text-align: center; }

/* right rail */
.rail { position: relative; width: 55px; flex: none; display: flex; flex-direction: column; align-items: center; gap: 8px; padding: 24px 2px 0 0; }
.grip { width: 14px; height: 2px; background: #999; margin-bottom: 7px; }
.rail button { width: 32px; height: 32px; justify-content: center; border-radius: 5px; }
.rail .on { background: #cdcfcf; }
.meter { position: absolute; right: 3px; top: 595px; width: 7px; height: 59px; border-radius: 3px; background: linear-gradient(#8c8f90 19px, #36cf62 19px); }

/* status bar */
.status { display: flex; align-items: center; height: 24px; flex: none; padding: 0 18px 0 13px; border-top: 1px solid #c6c9cc; gap: 8px; }
.status .vline { height: 14px; }
.theme { gap: 4px; margin-left: 10px; }
.stright { display: flex; align-items: center; margin-left: auto; gap: 14px; }
.stright .plain { gap: 5px; }
.comment { margin-left: 8px; }
.views { display: flex; gap: 8px; margin: 0 -6px 0 -6px; }
.views button { width: 24px; height: 23px; justify-content: center; border-radius: 3px; }
.views .on { background: #d0d1ca; }
.play { width: 20px; height: 18px; justify-content: center; border-radius: 3px; background: #e4661b; margin: 0 -6px 0 -4px; }
.stright .fit { margin: 0 11px 0 0; }
.stright .zoom { width: 108px; }

input.zoom::-webkit-slider-thumb { width: 11px; height: 11px; margin-top: -5px; border-color: #ddd; background: #fff; }

/* callouts over the window */
.marks { position: absolute; left: 0; top: 0; z-index: 2; pointer-events: none; filter: drop-shadow(2px 2px 2px rgba(0,0,0,.5)); }
.arrow path { stroke: #f00; stroke-width: 3; stroke-linecap: round; }
.arrow .tip { fill: #f00; stroke-width: 0; }
.num circle { fill: #00f; stroke: #fff; stroke-width: 3; }
.numt text { fill: #fff; font-size: 14px; font-weight: 500; text-anchor: middle; }

/* site watermark */
.brand { position: absolute; right: 11px; bottom: 18px; z-index: 3; display: flex; width: 472px; height: 113px; padding-right: 8px; background: rgba(255,255,255,.68); }
.words { display: flex; flex-direction: column; flex: 1; padding: 3px 0 0 11px; white-space: nowrap; }
.cn { font: 900 49px/54px "Noto Sans CJK SC", sans-serif; color: #ff2a2a; }
.url { font: 38px/58px "Liberation Serif", serif; color: #2a7bff; -webkit-text-stroke: 1px #2a7bff; }
.tag { width: 188px; border-radius: 28px; background: #2a7dfc; color: #fff; font: 700 92px/96px "Noto Sans CJK SC", sans-serif; text-align: center; }
.sub { position: absolute; right: 0; bottom: -10px; display: flex; }
.sub div { display: flex; flex-direction: column; }
.subcn { font: 700 21px/24px "Noto Sans CJK SC", sans-serif; color: rgba(20,80,200,.45); }
.suburl { font: 700 16px/18px "Liberation Sans", sans-serif; color: rgba(30,180,100,.8); }
```
